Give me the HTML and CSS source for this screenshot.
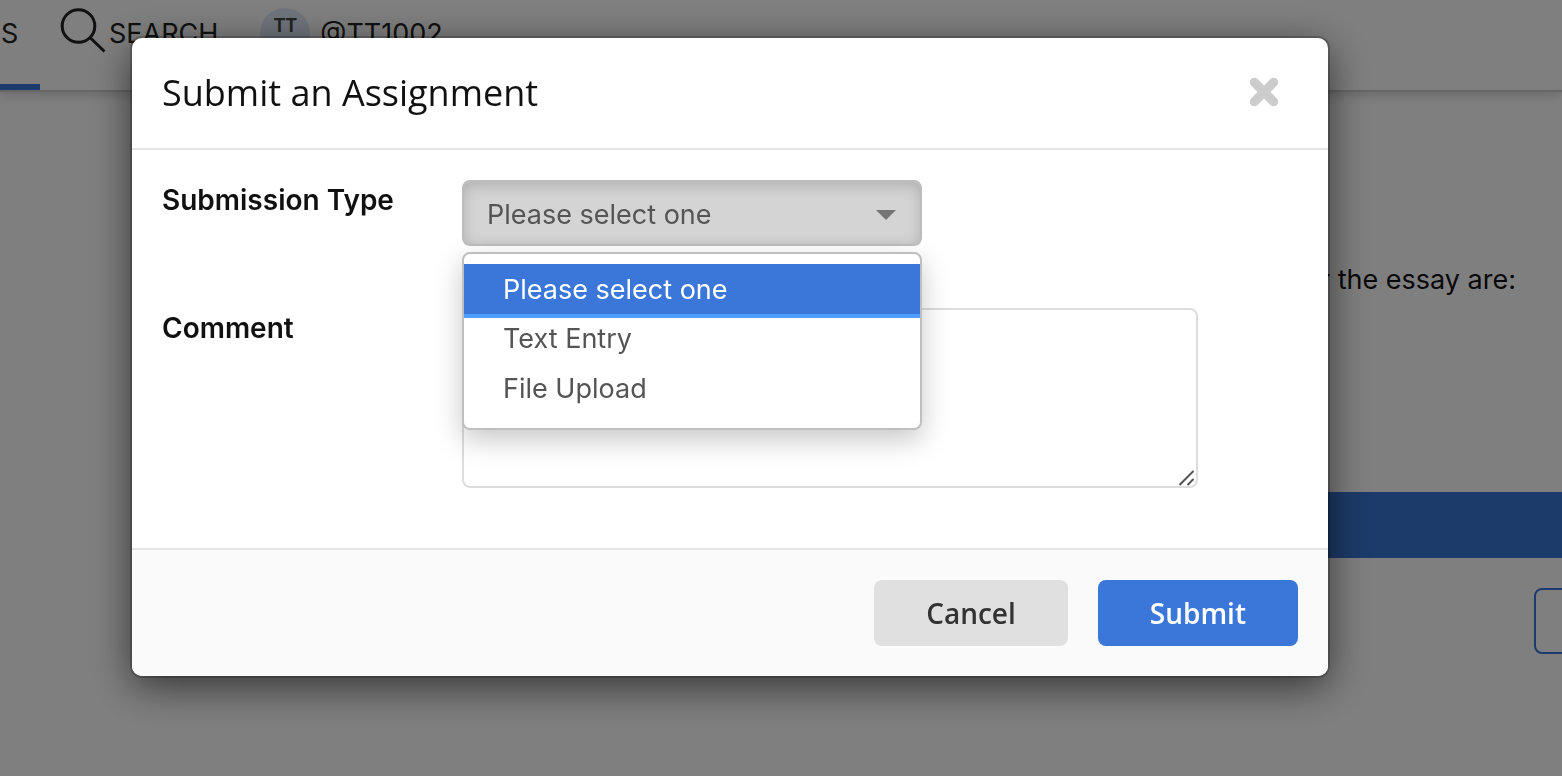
FILE: index.html
```html
<!DOCTYPE html>
<html lang="en">
<head>
<meta charset="utf-8">
<meta name="viewport" content="width=device-width, initial-scale=1">
<title>Submit an Assignment</title>
<link rel="stylesheet" href="styles.css">
</head>
<body>
<header class="topbar">
  <nav class="topnav">
    <a class="tab" href="#">S</a>
    <a class="nav-link search-link" href="#">
      <svg class="search-icon" viewBox="0 0 46 46" aria-hidden="true"><circle cx="18.500" cy="18" r="16.300"/><path d="M30 29.500 44.500 43.500"/></svg>
      <span>SEARCH</span>
    </a>
    <a class="nav-link user-link" href="#">
      <span class="avatar"><span class="avatar-initials">TT</span><span class="avatar-code">1002</span></span>
      <span>@TT1002</span>
    </a>
  </nav>
</header>
<main class="page">
  <p class="essay-text">r the essay are:</p>
  <div class="banner"></div>
  <button class="outline-button" type="button" aria-label="More"></button>
</main>

<div class="overlay">
  <section class="dialog" role="dialog" aria-modal="true" aria-labelledby="dialog-title">
    <div class="dialog-header">
      <h1 class="dialog-title" id="dialog-title">Submit an Assignment</h1>
      <button class="close-button" type="button" aria-label="Close">
        <svg class="close-icon" viewBox="0 0 28 28" aria-hidden="true"><path d="M5.500 5.500 22.500 22.500M22.500 5.500 5.500 22.500"/></svg>
      </button>
    </div>
    <form class="dialog-form">
      <div class="fields">
        <label class="field-label" for="type">Submission Type</label>
        <div class="select-wrap">
          <select class="select" id="type">
            <option>Please select one</option>
            <option>Text Entry</option>
            <option>File Upload</option>
          </select>
          <svg class="caret" viewBox="0 0 20 10" aria-hidden="true"><path d="M0 0H20L10 10Z"/></svg>
          <ul class="menu" role="listbox" aria-label="Submission Type">
            <li class="menu-item menu-item-active" role="option" aria-selected="true">Please select one</li>
            <li class="menu-item" role="option" aria-selected="false">Text Entry</li>
            <li class="menu-item" role="option" aria-selected="false">File Upload</li>
          </ul>
        </div>
        <label class="field-label" for="comment">Comment</label>
        <div class="comment-wrap">
          <textarea class="comment" id="comment"></textarea>
          <svg class="grip" viewBox="0 0 16 16" aria-hidden="true"><path d="M0.500 15 14.500 1M8.500 15 14.500 9"/></svg>
        </div>
      </div>
      <div class="dialog-footer">
        <button class="button button-cancel" type="button">Cancel</button>
        <button class="button button-submit" type="submit">Submit</button>
      </div>
    </form>
  </section>
</div>
</body>
</html>
```
FILE: styles.css
```css
* { box-sizing: border-box; }
body {
  margin: 0;
  min-height: 100vh;
  overflow: hidden;
  background: #fff;
  color: #111;
  font-family: Inter, "Liberation Sans", sans-serif;
  font-size: 27px;
}
button, select, textarea { font: inherit; }

.topbar {
  height: 92px;
  border-bottom: 2px solid #ccc;
  box-shadow: 0 2px 12px rgba(0, 0, 0, 0.2);
}
.topnav { display: flex; height: 90px; }
.topnav a { color: #222; text-decoration: none; }
.tab {
  width: 40px;
  padding: 17px 0 0 1px;
  border-bottom: 6px solid #3a76d4;
  line-height: 34px;
}
.nav-link { display: flex; align-items: flex-start; line-height: 34px; }
.nav-link > span { margin-top: 17px; }
.search-link { margin-left: 20px; gap: 3px; }
.search-icon {
  width: 46px;
  height: 46px;
  margin-top: 8px;
  fill: none;
  stroke: #222;
  stroke-width: 3;
}
.user-link { margin-left: 42px; gap: 10px; }
.nav-link .avatar {
  display: flex;
  flex-direction: column;
  align-items: center;
  width: 50px;
  height: 50px;
  margin-top: 8px;
  padding-top: 4px;
  border-radius: 50%;
  background: #dfe8f7;
  color: #444;
}
.avatar-initials { font: 600 20px/26px "Noto Sans", sans-serif; }
.avatar-code { font: 600 10px/14px "Noto Sans", sans-serif; }

.page { display: flex; flex-direction: column; }
.essay-text {
  margin: 171px 46px 0 0;
  line-height: 34px;
  text-align: right;
}
.banner {
  height: 66px;
  margin: 195px 0 0 50%;
  background: #3a76d4;
}
.outline-button {
  align-self: flex-end;
  width: 100px;
  height: 66px;
  margin: 30px -72px 0 0;
  border: 2px solid #3a76d4;
  border-radius: 8px;
  background: #fff;
}

.overlay {
  position: fixed;
  inset: 0;
  padding: 38px 234px 100px 132px;
  background: rgba(0, 0, 0, 0.5);
}
.dialog {
  border-radius: 10px;
  background: #fff;
  box-shadow: 0 0 0 2px rgba(0, 0, 0, 0.2), 0 10px 40px rgba(0, 0, 0, 0.6);
}
.dialog-header {
  display: flex;
  align-items: center;
  justify-content: space-between;
  height: 112px;
  padding: 0 48px 0 30px;
  border-bottom: 2px solid #e5e5e5;
}
.dialog-title {
  margin: 0;
  font: 400 36px/48px "Open Sans", sans-serif;
}
.close-button {
  display: flex;
  padding: 0 0 2px;
  border: 0;
  background: none;
}
.close-icon {
  width: 32px;
  height: 32px;
  stroke: #ccc;
  stroke-width: 8;
  stroke-linecap: round;
}

.fields {
  display: grid;
  grid-template-columns: 300px 1fr;
  row-gap: 62px;
  padding: 30px 130px 60px 30px;
}
.field-label {
  padding-top: 3px;
  font-size: 28px;
  font-weight: 600;
  line-height: 34px;
}
.select-wrap { position: relative; width: 460px; }
.select {
  display: block;
  width: 100%;
  height: 66px;
  padding: 2px 60px 0 23px;
  appearance: none;
  border: 2px solid #bdbdbd;
  border-radius: 8px;
  background: #d4d4d4;
  box-shadow: inset 0 4px 14px rgba(0, 0, 0, 0.17);
  color: #555;
}
.caret {
  position: absolute;
  top: 30px;
  right: 26px;
  width: 20px;
  height: 10px;
  fill: #757575;
  pointer-events: none;
}
.menu {
  position: absolute;
  z-index: 1;
  top: 72px;
  left: 0;
  width: 100%;
  margin: 0;
  padding: 10px 0 14px;
  border: 2px solid #bfbfbf;
  border-radius: 8px;
  background: #fff;
  box-shadow: 0 10px 28px rgba(0, 0, 0, 0.22);
  color: #555;
  list-style: none;
}
.menu-item { padding: 0 39px; line-height: 50px; }
.menu-item-active {
  margin-bottom: -4px;
  padding-top: 2px;
  border-bottom: 4px solid #4f9cff;
  background: #3b77d8;
  color: #fff;
  line-height: 48px;
}
.comment-wrap { position: relative; }
.comment {
  display: block;
  width: 100%;
  height: 180px;
  padding: 12px 16px;
  border: 2px solid #ddd;
  border-radius: 8px;
  background: #fff;
  resize: none;
}
.grip {
  position: absolute;
  right: 3px;
  bottom: 2px;
  width: 16px;
  height: 16px;
  fill: none;
  stroke: #555;
  stroke-width: 2;
  pointer-events: none;
}

.dialog-footer {
  display: flex;
  justify-content: flex-end;
  gap: 30px;
  padding: 30px;
  border-top: 2px solid #e5e5e5;
  border-radius: 0 0 10px 10px;
  background: #fafafa;
}
.button {
  height: 66px;
  padding: 0 52px;
  border: 0;
  border-radius: 8px;
  font: 600 28px/38px "Open Sans", sans-serif;
}
.button-cancel { background: #e0e0e0; color: #333; }
.button-submit { background: #3b77d8; color: #fff; }
```
